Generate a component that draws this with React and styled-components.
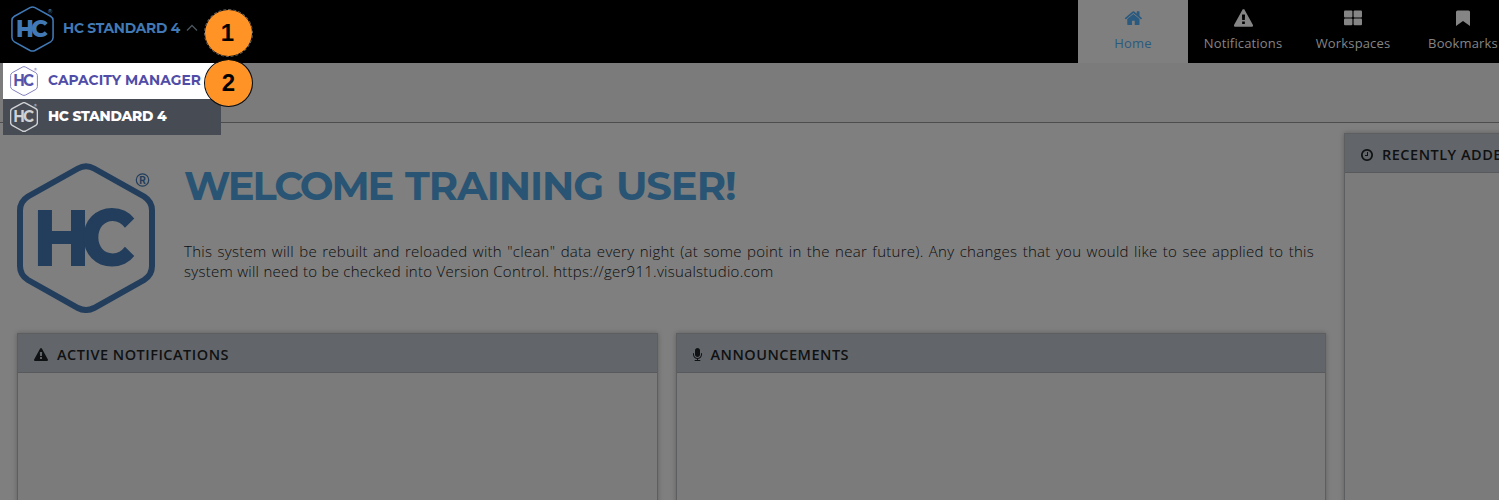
import React from "react";
import styled, { createGlobalStyle } from "styled-components";

const GlobalStyle = createGlobalStyle`
  * { box-sizing: border-box; }
  body { margin: 0; background: #7f7f7f; overflow: hidden; font-family: "Open Sans", "Noto Sans", sans-serif; }
`;

const display = `"Montserrat", "Inter", sans-serif`;

const Page = styled.div`
  position: relative;
  width: 1499px;
  height: 500px;
  overflow: hidden;
  background: #7f7f7f;
`;

const TopBar = styled.header`
  display: flex;
  justify-content: space-between;
  height: 63px;
  background: #000;
`;

const Brand = styled.div`
  display: flex;
  align-items: flex-start;
  padding: 6px 0 0 11px;
  color: #4079b6;
`;

const BrandName = styled.span`
  margin: 13px 0 0 9px;
  font: 700 13.8px/18px ${display};
  letter-spacing: ${(p) => p.$spacing};
  white-space: nowrap;
`;

const Caret = styled.svg`
  width: 12px;
  height: 8px;
  margin: 18px 0 0 6px;
`;

const Nav = styled.nav`
  display: flex;
  flex: none;
  width: 421px;
  overflow: hidden;
`;

const NavItem = styled.a`
  display: flex;
  flex: none;
  flex-direction: column;
  align-items: center;
  width: 110px;
  height: 63px;
  padding-top: 9px;
  gap: 6px;
  color: ${(p) => (p.$active ? "#2a5a80" : "#858585")};
  background: ${(p) => (p.$active ? "#7f7f7f" : "transparent")};
  font-size: 13px;
  line-height: 20px;
  letter-spacing: 0.15px;
  white-space: nowrap;
`;

const Glyph = styled.svg`
  flex: none;
  width: ${(p) => p.$w}px;
  height: ${(p) => p.$h}px;
  fill: currentColor;
`;

const SubBar = styled.div`
  height: 60px;
  background: #7b7b7b;
  border-bottom: 1px solid #4d4d4d;
`;

const Content = styled.main`
  display: flex;
  align-items: flex-start;
  gap: 18px;
  padding: 10px 0 0 17px;
`;

const MainColumn = styled.div`
  flex: none;
  width: 1309px;
`;

const Hero = styled.section`
  display: flex;
  height: 200px;
  padding-top: 30px;
`;

const HeroText = styled.div`
  width: 1130px;
  margin-left: 29px;
`;

const Title = styled.h1`
  margin: 0;
  color: #295473;
  font: 700 40px/46px ${display};
  letter-spacing: -1.05px;
  word-spacing: 2.5px;
  white-space: nowrap;
`;

const TightWord = styled.span`
  letter-spacing: -2.1px;
`;

const Message = styled.p`
  width: 1130px;
  margin: 32px 0 0;
  color: #0c0c0c;
  font-size: 15px;
  font-weight: 300;
  line-height: 20px;
  letter-spacing: 0.27px;
`;

const MessageLine = styled.span`
  display: block;
  white-space: nowrap;
  text-align: ${(p) => (p.$full ? "justify" : "left")};
  text-align-last: ${(p) => (p.$full ? "justify" : "left")};
`;

const PanelRow = styled.div`
  display: flex;
  gap: 18px;
`;

const Panel = styled.section`
  flex: none;
  width: ${(p) => p.$width}px;
  height: ${(p) => p.$height}px;
  background: #7b7b7b;
  border: 1px solid #5d5e60;
  box-shadow: 0 0 5px rgba(0, 0, 0, 0.25);
`;

const PanelHeader = styled.h2`
  display: flex;
  align-items: center;
  gap: ${(p) => p.$gap}px;
  height: 39px;
  margin: 0;
  padding: 3px 0 0 16px;
  color: #101112;
  background: #62666b;
  border-bottom: 1px solid #57595c;
  font-size: 14.5px;
  font-weight: 600;
  line-height: 20px;
  letter-spacing: 0.5px;
  white-space: nowrap;
`;

const Menu = styled.div`
  position: absolute;
  top: 63px;
  left: 3px;
  width: 218px;
`;

const MenuItem = styled.div`
  display: flex;
  align-items: center;
  gap: 10px;
  height: 36px;
  padding-left: 7px;
  color: ${(p) => (p.$selected ? "#fff" : "#4f4da8")};
  background: ${(p) => (p.$selected ? "#474b54" : "#fff")};
  font: ${(p) => (p.$selected ? 800 : 700)} 13.8px/18px ${display};
  letter-spacing: ${(p) => p.$spacing};
  white-space: nowrap;
`;

const MenuLabel = styled.span`
  margin-top: -2px;
`;

const Badge = styled.div`
  position: absolute;
  top: ${(p) => p.$top}px;
  left: 204px;
  display: flex;
  align-items: center;
  justify-content: center;
  width: 49px;
  height: 48px;
  padding-right: ${(p) => (p.$dashed ? 2 : 0)}px;
  border: 1.5px ${(p) => (p.$dashed ? "dashed #6b655f" : "solid #0b0b0b")};
  border-radius: 50%;
  color: #000;
  background: #ff9326;
  background-clip: padding-box;
  font: 700 24px/28px "Liberation Sans", sans-serif;
`;

function Logo({ width, height, stroke, color, mark = color, weight = 800 }) {
  return (
    <svg width={width} height={height} viewBox="0 0 138 150" preserveAspectRatio="none" style={{ flex: "none" }}>
      <path
        d="M61 5.500Q69 1 77 5.500L127 33.500Q135 38.500 135 47.500V103Q135 112 127 117L77 145Q69 149 61 145L11 117Q3 112 3 103V47.500Q3 38.500 11 33.500Z"
        fill="none"
        stroke={color}
        strokeWidth={stroke}
      />
      <g fill={mark} fontFamily='"Montserrat", "Inter", sans-serif' fontWeight={weight} fontSize="79">
        <text x="16" y="102.500" textLength="57" lengthAdjust="spacingAndGlyphs">H</text>
        <text x="64" y="102.500" textLength="54" lengthAdjust="spacingAndGlyphs">C</text>
      </g>
      <circle cx="125.500" cy="17" r="6.200" fill="none" stroke={color} strokeWidth="1.200" />
      <text x="125.500" y="20.700" textAnchor="middle" fill={color} fontFamily='"Inter", sans-serif' fontWeight="700" fontSize="10">R</text>
    </svg>
  );
}

const paths = {
  home: "M1408 992v480q0 26-19 45t-45 19h-384v-384h-256v384h-384q-26 0-45-19t-19-45v-480q0-1 .5-3t.5-3l575-474 575 474q1 2 1 6zm223-69l-62 74q-8 9-21 11h-3q-13 0-21-7l-692-577-692 577q-12 8-24 7-13-2-21-11l-62-74q-8-10-7-23.5t11-21.5l719-599q32-26 76-26t76 26l244 204v-195q0-14 9-23t23-9h192q14 0 23 9t9 23v408l219 182q10 8 11 21.5t-7 23.5z",
  warning: "M1024 1375v-190q0-14-9.5-23.5t-22.5-9.5h-192q-13 0-22.5 9.5t-9.5 23.5v190q0 14 9.5 23.5t22.5 9.5h192q13 0 22.5-9.5t9.5-23.5zm-2-374l18-459q0-12-10-19-13-11-24-11h-220q-11 0-24 11-10 7-10 21l17 457q0 10 10 16.5t24 6.5h185q14 0 23.5-6.5t10.5-16.5zm-14-934l768 1408q35 63-2 126-17 29-46.5 46t-63.5 17h-1536q-34 0-63.5-17t-46.5-46q-37-63-2-126l768-1408q17-31 47-49t65-18 65 18 47 49z",
  clock: "M1024 544v448q0 14-9 23t-23 9h-320q-14 0-23-9t-9-23v-64q0-14 9-23t23-9h224v-352q0-14 9-23t23-9h64q14 0 23 9t9 23zm416 352q0-148-73-273t-198-198-273-73-273 73-198 198-73 273 73 273 198 198 273 73 273-73 198-198 73-273zm224 0q0 209-103 385.5t-279.5 279.5-385.5 103-385.5-103-279.5-279.5-103-385.5 103-385.5 279.5-279.5 385.5-103 385.5 103 279.5 279.5 103 385.5z",
  mic: "M1344 704v128q0 221-147.500 384.500t-364.500 187.500v132h256q26 0 45 19t19 45-19 45-45 19h-640q-26 0-45-19t-19-45 19-45 45-19h256v-132q-217-24-364.500-187.500t-147.500-384.500v-128q0-26 19-45t45-19 45 19 19 45v128q0 185 131.500 316.500t316.500 131.500 316.500-131.500 131.500-316.500v-128q0-26 19-45t45-19 45 19 19 45zm-256-384v512q0 132-94 226t-226 94-226-94-94-226v-512q0-132 94-226t226-94 226 94 94 226z",
};

export default function App() {
  return (
    <Page>
      <GlobalStyle />
      <TopBar>
        <Brand>
          <Logo width={43} height={46} stroke={5} color="#4079b6" />
          <BrandName $spacing="-0.25px">HC STANDARD 4</BrandName>
          <Caret viewBox="0 0 12 8">
            <path d="M1 6.500L6 1.500L11 6.500" fill="none" stroke="#4b555c" strokeWidth="1.300" />
          </Caret>
        </Brand>
        <Nav>
          <NavItem $active>
            <Glyph $w={18} $h={18} viewBox="-50 40 1692 1692"><path d={paths.home} /></Glyph>
            Home
          </NavItem>
          <NavItem>
            <Glyph $w={19} $h={18} viewBox="0 0 1792 1664"><path d={paths.warning} /></Glyph>
            Notifications
          </NavItem>
          <NavItem>
            <Glyph $w={18} $h={18} viewBox="0 0 18 18">
              <rect x="0" y="1.500" width="8.400" height="7" rx="1" />
              <rect x="9.600" y="1.500" width="8.400" height="7" rx="1" />
              <rect x="0" y="9.500" width="8.400" height="6.700" rx="1" />
              <rect x="9.600" y="9.500" width="8.400" height="6.700" rx="1" />
            </Glyph>
            Workspaces
          </NavItem>
          <NavItem>
            <Glyph $w={14} $h={18} viewBox="0 0 14 18"><path d="M1.500 1.500h11q1.500 0 1.500 1.500v14l-7-5l-7 5V3q0-1.500 1.500-1.500z" /></Glyph>
            Bookmarks
          </NavItem>
        </Nav>
      </TopBar>
      <SubBar />
      <Content>
        <MainColumn>
          <Hero>
            <Logo width={138} height={150} stroke={6} color="#223e5c" />
            <HeroText>
              <Title><TightWord>WELCOME</TightWord> TRAINING USER!</Title>
              <Message>
                <MessageLine $full>
                  This system will be rebuilt and reloaded with "clean" data every night (at some point in the near future). Any changes that you would like to see applied to this
                </MessageLine>
                <MessageLine>
                  system will need to be checked into Version Control. https://ger911.visualstudio.com
                </MessageLine>
              </Message>
            </HeroText>
          </Hero>
          <PanelRow>
            <Panel $width={641} $height={180}>
              <PanelHeader $gap={9}>
                <Glyph $w={14} $h={13} viewBox="0 0 1792 1664"><path d={paths.warning} /></Glyph>
                ACTIVE NOTIFICATIONS
              </PanelHeader>
            </Panel>
            <Panel $width={650} $height={180}>
              <PanelHeader $gap={8.5}>
                <Glyph $w={9} $h={13} viewBox="192 0 1152 1664"><path d={paths.mic} /></Glyph>
                ANNOUNCEMENTS
              </PanelHeader>
            </Panel>
          </PanelRow>
        </MainColumn>
        <Panel $width={300} $height={400}>
          <PanelHeader $gap={9}>
            <Glyph $w={12} $h={12} viewBox="128 128 1536 1536"><path d={paths.clock} /></Glyph>
            RECENTLY ADDED
          </PanelHeader>
        </Panel>
      </Content>
      <Menu>
        <MenuItem $spacing="0.08px">
          <Logo width={28} height={30} stroke={4.5} color="#7674b8" mark="#5654aa" weight={700} />
          <MenuLabel>CAPACITY MANAGER</MenuLabel>
        </MenuItem>
        <MenuItem $selected $spacing="-0.25px">
          <Logo width={28} height={30} stroke={7} color="#d0d2d5" weight={700} />
          <MenuLabel>HC STANDARD 4</MenuLabel>
        </MenuItem>
      </Menu>
      <Badge $top={9} $dashed>1</Badge>
      <Badge $top={59}>2</Badge>
    </Page>
  );
}
